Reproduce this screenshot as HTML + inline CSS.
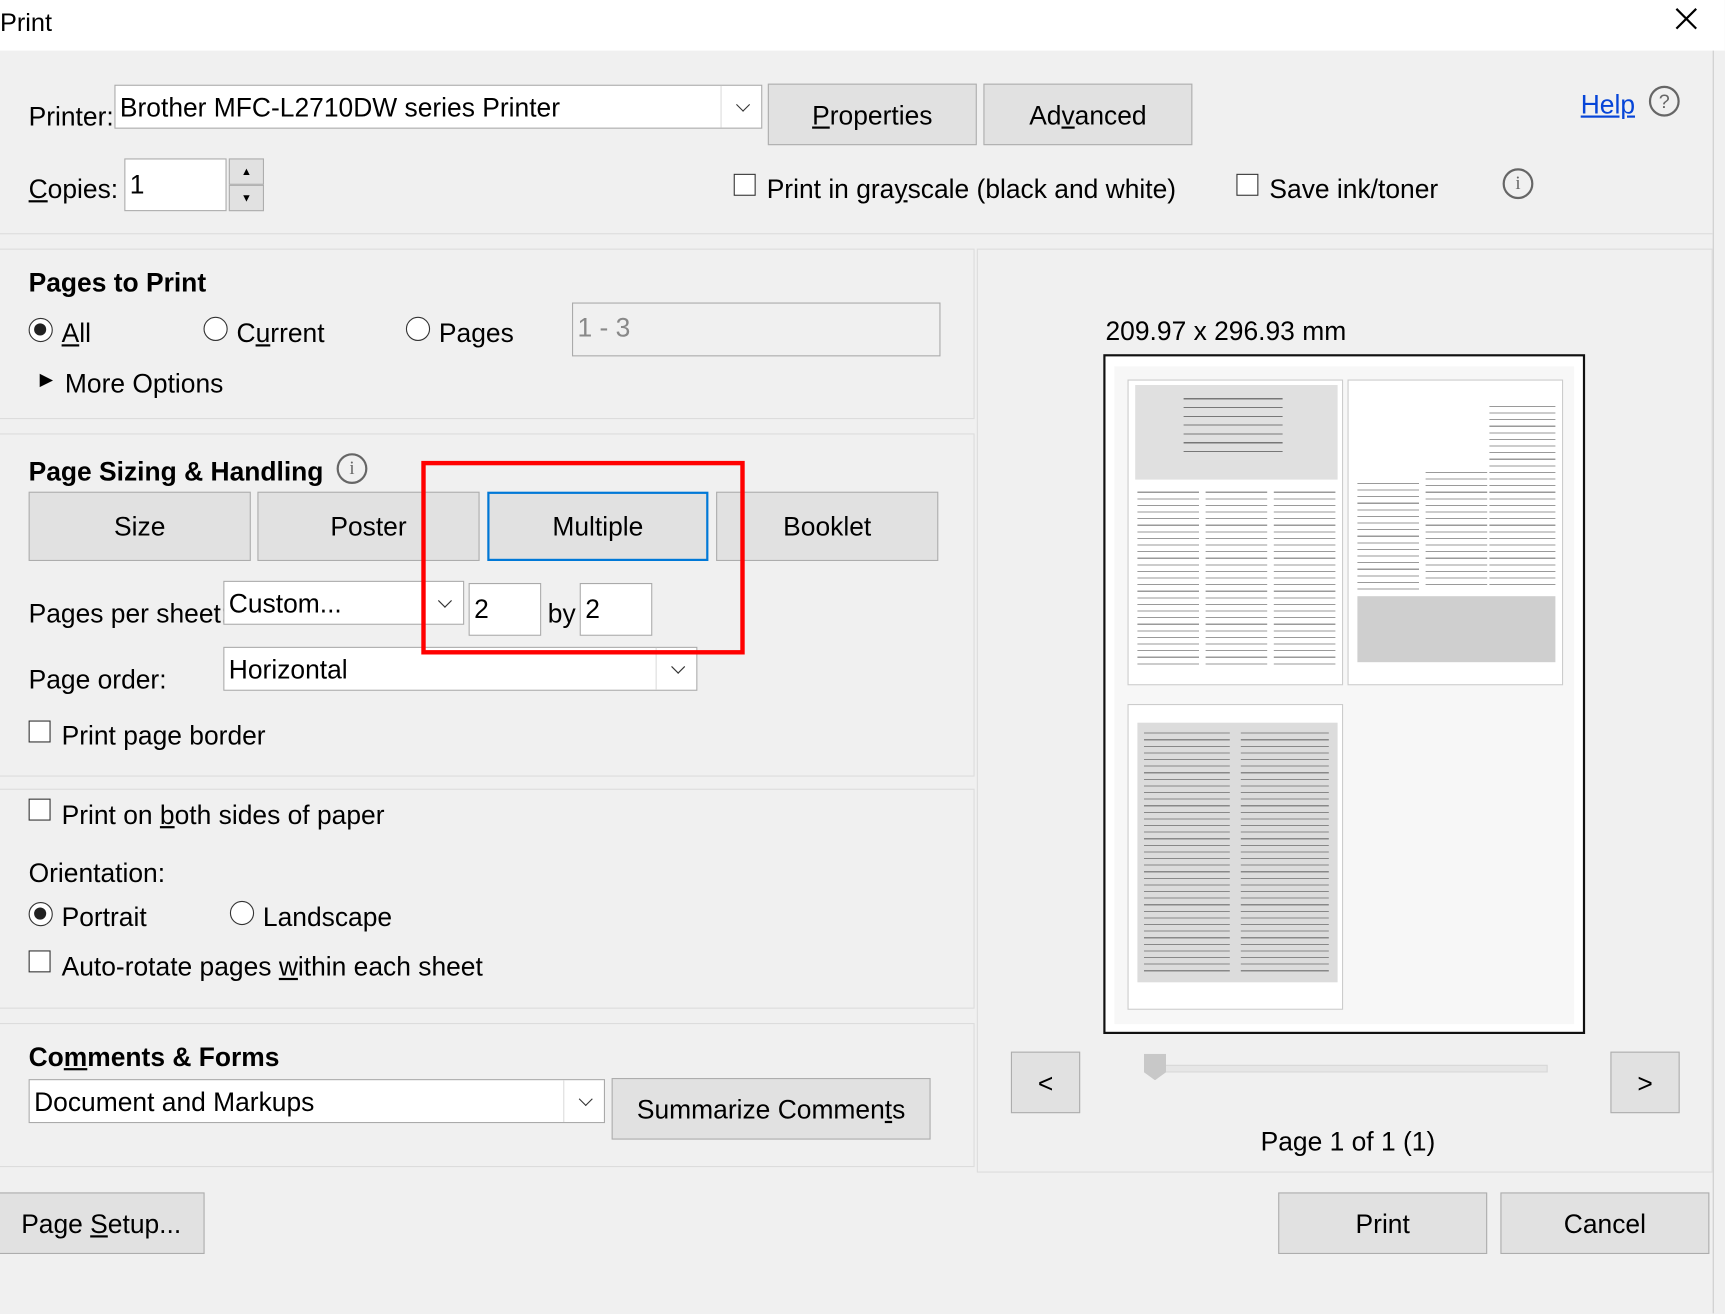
<!DOCTYPE html>
<html><head><meta charset="utf-8">
<style>
html,body{margin:0;padding:0;width:1725px;height:1314px;overflow:hidden;background:#f0f0f0}
#w{position:absolute;left:0;top:0;width:1568px;height:1194px;transform:scale(1.1);transform-origin:0 0;background:#f0f0f0;font-family:"Liberation Sans",sans-serif;font-size:24px;color:#000}
.a{position:absolute}
.t{position:absolute;white-space:nowrap;line-height:1;transform:translateY(2px)}
.btn{position:absolute;background:#e1e1e1;border:1px solid #adadad;box-sizing:border-box;display:flex;align-items:center;justify-content:center;padding-top:3px}
.in{position:absolute;background:#fff;border:1px solid #aaa;box-sizing:border-box;padding-left:4px;display:flex;align-items:center}
.dd{position:absolute;background:#fff;border:1px solid #aaa;box-sizing:border-box;padding-left:4px;padding-top:3px;display:flex;align-items:center}
.dd:after{content:"";position:absolute;right:12px;top:50%;width:8px;height:8px;border-right:1.5px solid #333;border-bottom:1.5px solid #333;transform:translateY(-70%) rotate(45deg)}
.dd .sep{position:absolute;right:36px;top:0;bottom:0;border-left:1px solid #ddd}
.cb{position:absolute;width:20px;height:20px;border:1.5px solid #333;background:#fff;box-sizing:border-box}
.rb{position:absolute;width:22px;height:22px;border:1.5px solid #333;border-radius:50%;background:#fff;box-sizing:border-box}
.rb.on:after{content:"";position:absolute;left:4px;top:4px;width:11px;height:11px;border-radius:50%;background:#222}
.pn{position:absolute;border:1px solid #dcdcdc;box-sizing:border-box}
.b{font-weight:bold}
u{text-decoration:underline}
.pg{position:absolute;background:#fff;border:1px solid #ccc;box-sizing:border-box;overflow:hidden}
.lines{position:absolute;background:repeating-linear-gradient(#fff 0 3px,#9a9a9a 3px 4px,#fff 4px 6px)}
.gry{position:absolute;background:#d8d8d8}
.ic{position:absolute;width:24px;height:24px;border:2px solid #666;border-radius:50%;color:#666;font-size:17px;text-align:center;line-height:24px;font-family:'Liberation Serif',serif}
</style></head><body><div id="w">
<div class="a" style="left:0;top:0;width:1568px;height:46px;background:#fff"></div>
<div class="t" style="left:0;top:7px;font-size:23px">Print</div>
<svg class="a" style="left:1522px;top:6px" width="22" height="22"><path d="M2 2L20 20M20 2L2 20" stroke="#000" stroke-width="2"/></svg>
<div class="a" style="left:1557px;top:46px;width:1px;height:1148px;background:#ccc"></div>

<div class="t" style="left:26px;top:93px">Printer:</div>
<div class="dd" style="left:104px;top:77px;width:589px;height:40px">Brother MFC-L2710DW series Printer<span class="sep"></span></div>
<div class="btn" style="left:698px;top:76px;width:190px;height:56px"><span><u>P</u>roperties</span></div>
<div class="btn" style="left:894px;top:76px;width:190px;height:56px"><span>Ad<u>v</u>anced</span></div>
<div class="t" style="left:1437px;top:82px;color:#0645d8;text-decoration:underline">Help</div>
<div class="ic" style="left:1499px;top:78px;font-family:'Liberation Sans',sans-serif;font-size:18px">?</div>
<div class="t" style="left:26px;top:159px"><u>C</u>opies:</div>
<div class="in" style="left:113px;top:144px;width:93px;height:48px;align-items:flex-start;padding-top:10px">1</div>
<div class="btn" style="left:208px;top:144px;width:32px;height:24px;font-size:10px;padding:0">▲</div>
<div class="btn" style="left:208px;top:168px;width:32px;height:24px;font-size:10px;padding:0">▼</div>
<div class="cb" style="left:667px;top:158px"></div>
<div class="t" style="left:697px;top:159px">Print in gra<u>y</u>scale (black and white)</div>
<div class="cb" style="left:1124px;top:158px"></div>
<div class="t" style="left:1154px;top:159px">Save ink/toner</div>
<div class="ic" style="left:1366px;top:153px">i</div>
<div class="a" style="left:0;top:212px;width:1557px;height:1px;background:#dcdcdc"></div>

<div class="pn" style="left:-1px;top:226px;width:887px;height:155px"></div>
<div class="t b" style="left:26px;top:244px">Pages to Print</div>
<div class="rb on" style="left:26px;top:289px"></div><div class="t" style="left:56px;top:290px"><u>A</u>ll</div>
<div class="rb" style="left:185px;top:288px"></div><div class="t" style="left:215px;top:290px">C<u>u</u>rrent</div>
<div class="rb" style="left:369px;top:288px"></div><div class="t" style="left:399px;top:290px">Pa<u>g</u>es</div>
<div class="in" style="left:520px;top:275px;width:335px;height:49px;background:#f0f0f0;color:#888;align-items:flex-start;padding-top:9px">1 - 3</div>
<div class="t" style="left:36px;top:336px;font-size:16px">▶</div>
<div class="t" style="left:59px;top:336px">More Options</div>

<div class="pn" style="left:-1px;top:394px;width:887px;height:312px"></div>
<div class="t b" style="left:26px;top:416px">Page Sizing &amp; Handling</div>
<div class="ic" style="left:306px;top:412px">i</div>
<div class="btn" style="left:26px;top:447px;width:202px;height:63px">Size</div>
<div class="btn" style="left:234px;top:447px;width:202px;height:63px">Poster</div>
<div class="btn" style="left:443px;top:447px;width:201px;height:63px;border:2px solid #0078d7">Multiple</div>
<div class="btn" style="left:651px;top:447px;width:202px;height:63px">Booklet</div>
<div class="t" style="left:26px;top:545px">Pages per sheet:</div>
<div class="dd" style="left:203px;top:528px;width:219px;height:40px">Custom...<span class="sep"></span></div>
<div class="in" style="left:426px;top:530px;width:66px;height:48px;align-items:flex-start;padding-top:10px">2</div>
<div class="t" style="left:498px;top:545px">by</div>
<div class="in" style="left:527px;top:530px;width:66px;height:48px;align-items:flex-start;padding-top:10px">2</div>
<div class="t" style="left:26px;top:605px">Page order:</div>
<div class="dd" style="left:203px;top:588px;width:431px;height:40px">Horizontal<span class="sep"></span></div>
<div class="cb" style="left:26px;top:655px"></div>
<div class="t" style="left:56px;top:656px">Print page border</div>
<div class="a" style="left:383px;top:419px;width:294px;height:176px;border:4px solid #f00;box-sizing:border-box"></div>

<div class="pn" style="left:-1px;top:717px;width:887px;height:200px"></div>
<div class="cb" style="left:26px;top:726px"></div>
<div class="t" style="left:56px;top:728px">Print on <u>b</u>oth sides of paper</div>
<div class="t" style="left:26px;top:781px">Orientation:</div>
<div class="rb on" style="left:26px;top:820px"></div><div class="t" style="left:56px;top:821px">Portrait</div>
<div class="rb" style="left:209px;top:819px"></div><div class="t" style="left:239px;top:821px">Landscape</div>
<div class="cb" style="left:26px;top:864px"></div>
<div class="t" style="left:56px;top:866px">Auto-rotate pages <u>w</u>ithin each sheet</div>

<div class="pn" style="left:-1px;top:930px;width:887px;height:131px"></div>
<div class="t b" style="left:26px;top:948px">Co<u>m</u>ments &amp; Forms</div>
<div class="dd" style="left:26px;top:981px;width:524px;height:40px">Document and Markups<span class="sep"></span></div>
<div class="btn" style="left:556px;top:980px;width:290px;height:56px"><span>Summarize Commen<u>t</u>s</span></div>

<div class="pn" style="left:888px;top:226px;width:669px;height:840px"></div>
<div class="t" style="left:1005px;top:288px">209.97 x 296.93 mm</div>
<div class="a" style="left:1003px;top:322px;width:438px;height:618px;border:2px solid #111;box-sizing:border-box;background:#fff"></div>
<div class="a" style="left:1013px;top:333px;width:418px;height:598px;background:#f7f7f7"></div>
<div class="pg" style="left:1025px;top:345px;width:196px;height:278px">
 <div class="gry" style="left:6px;top:4px;width:184px;height:86px;background:#e0e0e0"></div>
 <div class="lines" style="left:50px;top:12px;width:90px;height:60px;background:repeating-linear-gradient(#e0e0e0 0 4px,#777 4px 5px,#e0e0e0 5px 8px)"></div>
 <div class="lines" style="left:8px;top:98px;width:56px;height:164px"></div>
 <div class="lines" style="left:70px;top:98px;width:56px;height:164px"></div>
 <div class="lines" style="left:132px;top:98px;width:56px;height:164px"></div>
</div>
<div class="pg" style="left:1225px;top:345px;width:196px;height:278px">
 <div class="lines" style="left:8px;top:90px;width:56px;height:100px"></div>
 <div class="lines" style="left:70px;top:80px;width:56px;height:110px"></div>
 <div class="lines" style="left:128px;top:20px;width:60px;height:170px"></div>
 <div class="gry" style="left:8px;top:196px;width:180px;height:60px;background:#cfcfcf"></div>
</div>
<div class="pg" style="left:1025px;top:640px;width:196px;height:278px">
 <div class="gry" style="left:8px;top:16px;width:182px;height:236px;background:#dcdcdc"></div>
 <div class="lines" style="left:14px;top:22px;width:78px;height:224px;background:repeating-linear-gradient(#dcdcdc 0 3px,#888 3px 4px,#dcdcdc 4px 6px)"></div>
 <div class="lines" style="left:102px;top:22px;width:80px;height:224px;background:repeating-linear-gradient(#dcdcdc 0 3px,#888 3px 4px,#dcdcdc 4px 6px)"></div>
</div>
<div class="btn" style="left:919px;top:956px;width:63px;height:56px">&lt;</div>
<div class="btn" style="left:1464px;top:956px;width:63px;height:56px">&gt;</div>
<div class="a" style="left:1040px;top:968px;width:365px;height:5px;background:#e6e6e6;border:1px solid #d8d8d8"></div>
<div class="a" style="left:1040px;top:958px;width:20px;height:24px;background:#c8c8c8;clip-path:polygon(0 0,100% 0,100% 70%,50% 100%,0 70%)"></div>
<div class="t" style="left:1146px;top:1025px">Page 1 of 1 (1)</div>

<div class="btn" style="left:-2px;top:1084px;width:188px;height:56px"><span>Page <u>S</u>etup...</span></div>
<div class="btn" style="left:1162px;top:1084px;width:190px;height:56px">Print</div>
<div class="btn" style="left:1364px;top:1084px;width:190px;height:56px">Cancel</div>
</div></body></html>
